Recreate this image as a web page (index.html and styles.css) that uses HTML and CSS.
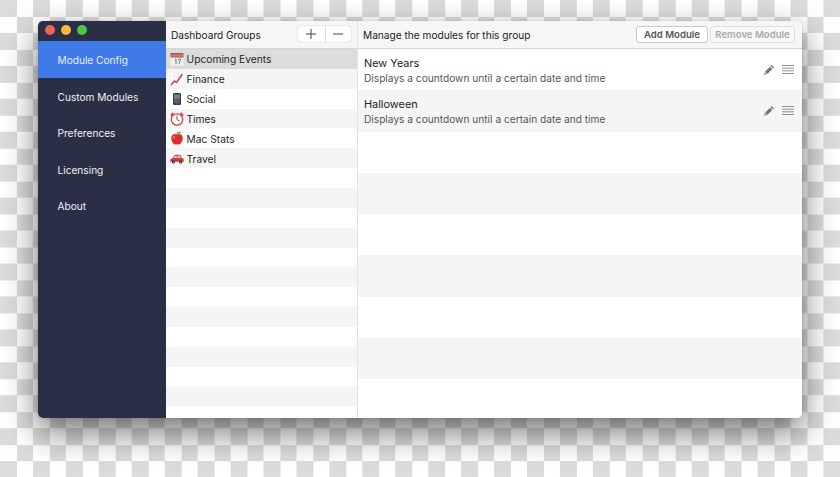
FILE: index.html
```html
<!DOCTYPE html>
<html lang="en">
<head>
<meta charset="utf-8">
<title>Module Config</title>
<link rel="stylesheet" href="styles.css">
</head>
<body>
<svg class="defs" width="0" height="0" aria-hidden="true">
  <symbol id="pencil" viewBox="0 0 12 12"><path d="M8.600 1.100l2.300 2.300-1 1-2.300-2.300zM7 2.700l2.300 2.300-5 5-2.300-2.300zM1.600 8.300l2.100 2.100-1 .4-1.500-1z" fill="#757575"/><path d="M.4 11.600l.6-1.200.6.6z" fill="#757575"/></symbol>
  <symbol id="lines" viewBox="0 0 12 9"><path d="M0 .5h12M0 3.200h12M0 5.800h12M0 8.500h12" stroke="#8f8f8f" stroke-width="1" fill="none"/></symbol>
</svg>
<main class="window">
  <nav class="sidebar">
    <div class="lights"><span class="light red"></span><span class="light yellow"></span><span class="light green"></span></div>
    <a class="nav-item active">Module Config</a>
    <a class="nav-item">Custom Modules</a>
    <a class="nav-item">Preferences</a>
    <a class="nav-item">Licensing</a>
    <a class="nav-item">About</a>
  </nav>
  <section class="groups">
    <header class="bar groups-bar">
      <h2 class="bar-title">Dashboard Groups</h2>
      <div class="segmented">
        <button class="seg"><svg width="10" height="10" viewBox="0 0 10 10"><path d="M5 0v10M0 5h10" stroke="#444" stroke-width="1"/></svg></button>
        <button class="seg"><svg width="10" height="10" viewBox="0 0 10 10"><path d="M0 5h10" stroke="#444" stroke-width="1"/></svg></button>
      </div>
    </header>
    <ul class="group-list">
      <li class="group selected">
        <svg class="emoji" viewBox="0 0 14 14"><rect x=".5" y="1" width="13" height="12.500" fill="#f2f0ee"/><rect x=".5" y="1" width="13" height="4.500" fill="#a8504e"/><path d="M2 2.200v2.400M4 2.200v2.400M6 2.200v2.400M8 2.200v2.400M10 2.200v2.400M12 2.200v2.400" stroke="#e6c4c2" stroke-width=".8"/><path d="M5 7.600l1-.6v5M8 7.200h2.600L8.800 12" stroke="#555" stroke-width=".8" fill="none"/></svg>
        <span>Upcoming Events</span></li>
      <li class="group">
        <svg class="emoji" viewBox="0 0 14 14"><rect x=".5" y=".5" width="13" height="13" fill="#fbfbfb"/><path d="M2 4.500h10M2 8h10M4.500 1v12M8.500 1v12" stroke="#dde3ea" stroke-width=".6"/><path d="M1 13l3.500-4 2 1.500L12.500 2" stroke="#c8423f" stroke-width="1.400" fill="none"/></svg>
        <span>Finance</span></li>
      <li class="group">
        <svg class="emoji" viewBox="0 0 14 14"><rect x="3" y="1" width="8" height="12" rx="1.200" fill="#3b3f45"/><rect x="4" y="2.500" width="6" height="8" fill="#75808c"/><rect x="4" y="6.500" width="6" height="4" fill="#565c66"/><circle cx="7" cy="11.800" r=".6" fill="#999"/></svg>
        <span>Social</span></li>
      <li class="group">
        <svg class="emoji" viewBox="0 0 14 14"><path d="M.8 3.600L3.400.9M13.200 3.600L10.600.9" stroke="#d4433c" stroke-width="1.800"/><circle cx="7" cy="7.500" r="5.700" fill="#fff" stroke="#d4433c" stroke-width="1.300"/><path d="M7 3.600v4l2.600 1.400" stroke="#444" stroke-width=".9" fill="none"/></svg>
        <span>Times</span></li>
      <li class="group">
        <svg class="emoji" viewBox="0 0 14 14"><path d="M7 3.600C5.200 2.400 1.400 2.700 1.200 7c-.1 3.200 2.300 6.600 4 6.600.7 0 1.100-.4 1.800-.4s1.100.4 1.800.4c1.700 0 4.100-3.400 4-6.600C12.600 2.700 8.800 2.400 7 3.600z" fill="#d8302c"/><path d="M7 3.500C7 2.300 7.300 1.500 8 .8" stroke="#6b4a2a" stroke-width=".8" fill="none"/><path d="M7.600 2.600c.6-1.500 2-2 3.600-1.800-.4 1.500-1.900 2.300-3.600 1.800z" fill="#5aa336"/><ellipse cx="4" cy="6.200" rx=".9" ry="1.500" fill="#ef8a80"/></svg>
        <span>Mac Stats</span></li>
      <li class="group">
        <svg class="emoji" viewBox="0 0 14 14"><path d="M.3 10.800V8.600C.5 7.700 1.500 7.400 2.600 7.200L4.300 4.400c.3-.5.700-.7 1.300-.7h3.300c.8 0 1.300.3 1.700.9l1.500 2.400c1 .3 1.700.9 1.700 1.800v2z" fill="#d23a34"/><path d="M3.600 7.100L5 4.700h1.800v2.400zM7.600 4.700h1.500c.4 0 .6.100.8.400l1.200 2H7.600z" fill="#bfd4e2"/><circle cx="3.400" cy="10.900" r="1.600" fill="#333"/><circle cx="10.700" cy="10.900" r="1.600" fill="#333"/><circle cx="3.400" cy="10.900" r=".6" fill="#aaa"/><circle cx="10.700" cy="10.900" r=".6" fill="#aaa"/></svg>
        <span>Travel</span></li>
      <li class="group"></li><li class="group"></li><li class="group"></li><li class="group"></li><li class="group"></li><li class="group"></li>
      <li class="group"></li><li class="group"></li><li class="group"></li><li class="group"></li><li class="group"></li><li class="group"></li><li class="group"></li>
    </ul>
  </section>
  <section class="modules">
    <header class="bar modules-bar">
      <h2 class="bar-title">Manage the modules for this group</h2>
      <div class="actions">
        <button class="btn btn-add">Add Module</button>
        <button class="btn btn-remove">Remove Module</button>
      </div>
    </header>
    <ul class="module-list">
      <li class="module">
        <div class="module-text"><div class="module-name">New Years</div><div class="module-desc">Displays a countdown until a certain date and time</div></div>
        <svg class="pencil"><use href="#pencil"/></svg><svg class="lines"><use href="#lines"/></svg>
      </li>
      <li class="module">
        <div class="module-text"><div class="module-name">Halloween</div><div class="module-desc">Displays a countdown until a certain date and time</div></div>
        <svg class="pencil"><use href="#pencil"/></svg><svg class="lines"><use href="#lines"/></svg>
      </li>
      <li class="module"></li><li class="module"></li><li class="module"></li><li class="module"></li><li class="module"></li><li class="module"></li><li class="module"></li>
    </ul>
  </section>
</main>
</body>
</html>
```
FILE: styles.css
```css
* { box-sizing: border-box; }
html, body { height: 100%; }
body {
  margin: 0;
  height: 477px;
  overflow: hidden;
  padding: 21px 38px 59px;
  font-family: Inter, "Liberation Sans", sans-serif;
  background: conic-gradient(#fff 25%, #dcdcdc 0 50%, #fff 0 75%, #dcdcdc 0) 0 0 / 32.94px 32.94px;
}
.defs { position: absolute; }
.window {
  display: flex;
  height: 397px;
  border-radius: 5px;
  overflow: hidden;
  background: #fff;
  box-shadow: 0 14px 34px rgba(0, 0, 0, .55), 0 0 2px rgba(0, 0, 0, .15);
}
.sidebar { flex: 0 0 128px; background: #2a2f45; display: flex; flex-direction: column; }
.lights { display: flex; gap: 6.100px; height: 20px; padding: 4px 0 0 7px; }
.light { width: 10px; height: 10px; border-radius: 50%; }
.red { background: #f0625a; }
.yellow { background: #f6b93a; }
.green { background: #4fc546; }
.nav-item {
  height: 36.500px;
  padding: 2px 0 0 19.500px;
  display: flex;
  align-items: center;
  color: #f0f1f4;
  font-size: 10.150px;
}
.active { background: #3f7ae8; color: #e6eefc; }
.groups { flex: 0 0 192px; display: flex; flex-direction: column; border-right: 1px solid #e2e2e2; min-width: 0; }
.modules { flex: 1; display: flex; flex-direction: column; min-width: 0; }
.bar {
  flex: 0 0 28px;
  display: flex;
  align-items: center;
  justify-content: space-between;
  background: #f6f6f6;
  border-bottom: 1px solid #d6d6d6;
}
.groups-bar { padding: 0 6px 1px 5px; }
.modules-bar { padding: 0 7px 1px 5px; }
.bar-title { margin: 2px 0 0; font-size: 10.150px; font-weight: 400; color: #1c1c1c; }
.segmented { display: flex; height: 16px; background: #fff; border-radius: 3px; box-shadow: 0 0 1px rgba(0,0,0,.45); }
.seg { width: 26.500px; padding: 0; border: 0; background: none; display: flex; align-items: center; justify-content: center; }
.seg + .seg { border-left: 1px solid #dedede; }
.actions { display: flex; gap: 2px; }
.btn {
  height: 17px;
  padding: 0;
  background: #fff;
  border-radius: 3px;
  font-family: inherit;
  font-size: 9.600px;
  font-weight: 600;
}
.btn-add { width: 72px; border: 1px solid #c9c9c9; color: #555; }
.btn-remove { width: 85px; border: 1px solid #e0e0e0; color: #a8a8a8; background: #f8f8f8; }
.group-list, .module-list { list-style: none; margin: 0; padding: 0; flex: 1; overflow: hidden; background: #fff; }
.group {
  height: 19.870px;
  display: flex;
  align-items: center;
  gap: 2.500px;
  padding: 1px 0 0 4px;
  font-size: 10.250px;
  color: #1f1f1f;
}
.group:nth-child(even), .module:nth-child(even) { background: #f5f5f5; }
.group.selected { background: #dcdcdc; }
.emoji { width: 14px; height: 14px; flex: none; margin-top: -1px; }
.module { height: 41.250px; display: flex; align-items: center; padding: 2px 8px 0 6px; }
.module-text { flex: 1; min-width: 0; }
.module-name { font-size: 10.900px; line-height: 15px; color: #222; }
.module-desc { font-size: 10.160px; line-height: 14px; color: #555; }
.pencil { width: 12px; height: 12px; margin: 0 7px 2px 0; }
.lines { width: 12px; height: 9px; margin-bottom: 2px; }
```
